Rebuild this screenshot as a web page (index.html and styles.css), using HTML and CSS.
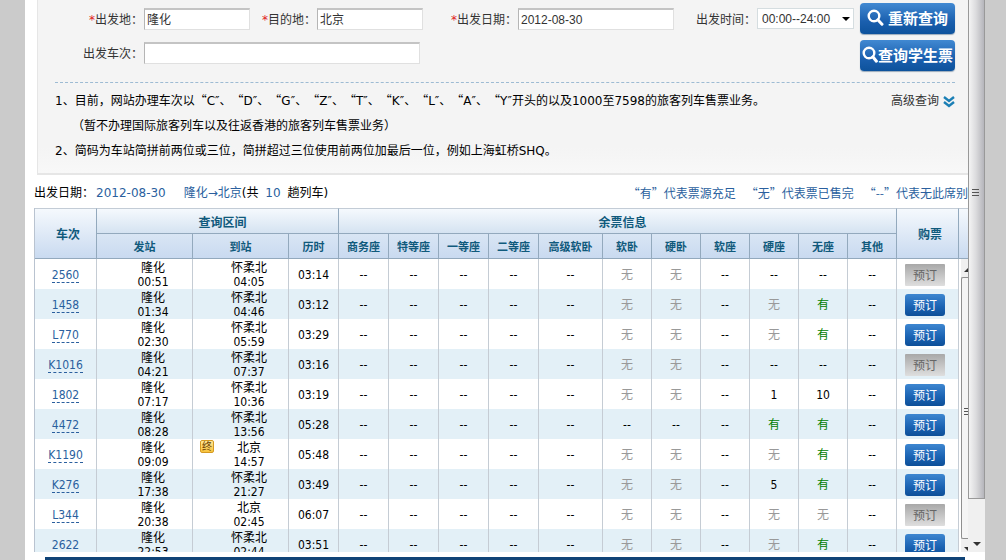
FILE: index.html
```
<!DOCTYPE html>
<html lang="zh-CN">
<head>
    <meta charset="UTF-8">
    <meta name="viewport" content="width=device-width, initial-scale=1.0">
    <title>车票查询</title>
    <link rel="stylesheet" href="styles.css">
</head>
<body>
    <div class="frame">
        <main class="content">
            <section class="panel">
                <form class="search">
                    <div class="fields">
                        <label for="from"><i>*</i>出发地：</label>
                        <input id="from" type="text" value="隆化">
                        <label for="to"><i>*</i>目的地：</label>
                        <input id="to" type="text" value="北京">
                        <label for="date"><i>*</i>出发日期：</label>
                        <input id="date" type="text" class="latin" value="2012-08-30">
                        <label for="time">出发时间：</label>
                        <div class="select-wrap">
                            <select id="time" class="latin"><option>00:00--24:00</option></select>
                        </div>
                        <label for="train">出发车次：</label>
                        <input id="train" type="text" class="train" value="">
                    </div>
                    <div class="actions">
                        <button type="button" class="btn-search">
                            <svg width="17" height="17" viewBox="0 0 17 17"><circle cx="7" cy="7" r="5.3" fill="none" stroke="#fff" stroke-width="2.4"/><path d="M10.8 10.8L15 15.2" stroke="#fff" stroke-width="3" stroke-linecap="round"/></svg>
                            <span>重新查询</span>
                        </button>
                        <button type="button" class="btn-search btn-student">
                            <svg width="16" height="17" viewBox="0 0 16 17"><circle cx="7" cy="7" r="5.3" fill="none" stroke="#fff" stroke-width="2.4"/><path d="M10.8 10.8L14.4 15.2" stroke="#fff" stroke-width="3" stroke-linecap="round"/></svg>
                            <span>查询学生票</span>
                        </button>
                    </div>
                </form>
                <div class="notes">
                    <div class="notes-text">
                        <p>1、目前，网站办理车次以<q>C</q>、<q>D</q>、<q>G</q>、<q>Z</q>、<q>T</q>、<q>K</q>、<q>L</q>、<q>A</q>、<q>Y</q>开头的以及1000至7598的旅客列车售票业务。</p>
                        <p class="sub">（暂不办理国际旅客列车以及往返香港的旅客列车售票业务）</p>
                        <p>2、简码为车站简拼前两位或三位，简拼超过三位使用前两位加最后一位，例如上海虹桥SHQ。</p>
                    </div>
                    <a href="#" class="advanced">高级查询
                        <svg width="12" height="12" viewBox="0 0 12 12" fill="none" stroke="#1b7fb5" stroke-width="2.4"><path d="M1 1l5 4 5-4M1 6l5 4 5-4"/></svg>
                    </a>
                </div>
            </section>

            <div class="summary">
                <p>出发日期：<b class="day">2012-08-30</b><b>隆化→北京</b>(共 <b class="count">10</b> 趟列车)</p>
                <p class="legend"><span>“有”代表票源充足</span><span>“无”代表票已售完</span><span>“--”代表无此席别</span></p>
            </div>

            <div class="grid">
                <table>
                    <colgroup>
                        <col class="w62"><col class="w96"><col class="w96"><col class="w50">
                        <col class="w50"><col class="w50"><col class="w50"><col class="w50"><col class="w64">
                        <col class="w49"><col class="w49"><col class="w49"><col class="w49"><col class="w49"><col class="w49">
                        <col class="w62"><col>
                    </colgroup>
                    <thead>
                        <tr>
                            <th rowspan="2" class="tall">车次</th>
                            <th colspan="3">查询区间</th>
                            <th colspan="11">余票信息</th>
                            <th rowspan="2" class="tall">购票</th>
                            <th rowspan="2" class="tall"></th>
                        </tr>
                        <tr class="second">
                            <th>发站</th><th>到站</th><th>历时</th>
                            <th>商务座</th><th>特等座</th><th>一等座</th><th>二等座</th><th>高级软卧</th>
                            <th>软卧</th><th>硬卧</th><th>软座</th><th>硬座</th><th>无座</th><th>其他</th>
                        </tr>
                    </thead>
                    <tbody id="trains"></tbody>
                </table>
                <div class="inner-bar"><span class="up"></span><div class="thumb"></div><span class="down"></span></div>
            </div>
        </main>
        <div class="outer-bar"><div class="thumb"></div><span class="down"></span></div>
    </div>
    <footer><div class="foot-line"></div></footer>
    <script src="trains.js"></script>
</body>
</html>
```

FILE: styles.css
```
* { box-sizing: border-box; }
body { margin: 0; height: 100vh; padding: 0 21px 0 25px; background: #cbcbcb; display: flex; flex-direction: column; font: 12px/15px "DejaVu Sans", "Noto Sans CJK SC", sans-serif; text-spacing-trim: space-all; color: #000; }
p { margin: 0; }
b, i { font-weight: normal; font-style: normal; }
.frame { flex: 1; min-height: 0; display: flex; background: #fff; overflow: hidden; }
.content { flex: 1; min-width: 0; padding-left: 9px; display: flex; flex-direction: column; overflow: hidden; }

/* search panel */
.panel { margin-left: 3px; padding: 3px 13px 9px 17px; background: linear-gradient(#f4f4f4 85%, #f8f8f8); border: 1px solid #e6e6e6; border-width: 0 0 2px 1px; }
.search { display: flex; justify-content: space-between; height: 80px; border-bottom: 1px dashed #9dbbd3; }
.fields { display: grid; grid-template-columns: 89px 106px 67px 106px 95px 156px 83px 97px; grid-auto-rows: 22px; row-gap: 12px; padding-top: 5px; align-content: start; }
.fields label { padding-right: 1px; text-align: right; line-height: 24px; color: #333; white-space: nowrap; }
.fields i { color: #e02020; }
.fields input { min-width: 0; height: 22px; padding: 0 0 2px 2px; border: 1px solid #e0e0e0; border-top: 2px solid #c4c4c4; border-left-color: #b5b5b5; background: #fff; font: inherit; color: #333; }
.fields .latin { font-family: "Liberation Sans", Arial, sans-serif; }
.fields input.latin { padding-bottom: 0; }
.fields .train { grid-column: span 4; width: 276px; }
.select-wrap { position: relative; height: 21px; }
.select-wrap select { width: 100%; height: 21px; padding: 0 0 0 4px; border: 1px solid #d5dde0; background: #fff; appearance: none; font-size: 12px; color: #333; }
.select-wrap::after { content: ""; position: absolute; right: 4px; top: 9px; border: 4px solid transparent; border-top-color: #000; border-bottom: 0; }
.actions { display: flex; flex-direction: column; gap: 6px; width: 95px; }
.btn-search { display: flex; align-items: center; justify-content: center; gap: 4px; height: 31px; padding: 0 0 2px; border: 0; border-radius: 4px; background: linear-gradient(#4189d2, #1a5fae 60%, #0d529c); box-shadow: 0 1px 1px #9ab; color: #fff; font: bold 15px/20px "Noto Sans CJK SC", sans-serif; white-space: nowrap; }
.btn-student { gap: 0; }
.notes { display: flex; justify-content: space-between; align-items: flex-start; padding-top: 6px; line-height: 25px; }
.notes-text { white-space: nowrap; }
.notes .sub { padding-left: 17px; }
.notes q { quotes: "“" "″"; }
.notes q::before { font-family: "Noto Sans CJK SC", sans-serif; line-height: 15px; }
.advanced { display: flex; align-items: center; gap: 4px; color: #333; text-decoration: none; white-space: nowrap; }

/* result summary */
.summary { display: flex; justify-content: space-between; height: 33px; line-height: 36px; white-space: nowrap; }
.summary b, .legend { color: #2a5f9e; }
.summary .day { margin: 0 18px 0 2px; }
.summary .count { margin: 0 3px; }
.legend { display: flex; gap: 10px; font-family: "Noto Sans CJK SC", sans-serif; }

/* ticket grid */
.grid { position: relative; flex: 1; min-height: 0; overflow: hidden; }
table { width: 100%; table-layout: fixed; border-collapse: separate; border-spacing: 0; border-left: 1px solid #b9c3d0; }
.w49 { width: 49px; }
.w50 { width: 50px; }
.w62 { width: 62px; }
.w64 { width: 64px; }
.w96 { width: 96px; }
th { height: 25px; padding: 0 0 0 10px; border-top: 1px solid #c3ccd6; border-right: 1px solid #93a9bd; background: linear-gradient(#f5f9fd, #d5e3f1); color: #105a7c; font: bold 12px/15px "Noto Sans CJK SC", sans-serif; white-space: nowrap; }
.second th, .tall { border-bottom: 1px solid #93a9bd; }
.second th { height: 26px; padding: 0; border-top-color: #93a9bd; background: linear-gradient(#d9e6f4, #c9daf0); font-size: 11px; }
.tall { padding-left: 5px; background: linear-gradient(#f5f9fd, #c9daf0); }
th:last-child, td:last-child { border-right: 0; }
.second th:last-child { border-right: 1px solid #93a9bd; }
td { height: 30px; padding: 2px 0 0; border-right: 1px solid #c5ccd4; text-align: center; line-height: 14px; font-family: "DejaVu Sans Condensed", "Noto Sans CJK SC", sans-serif; }
tr:nth-child(even) td { background: #e3f0f7; }
td:last-child, tr:nth-child(even) td:last-child { background: #fff; }
.station { position: relative; padding-left: 17px; }
.no { color: #999; }
.yes { color: #008000; }
.train-no { color: #2a5f9e; text-decoration: none; border-bottom: 1px dashed #2a5f9e; }
.last-stop { position: absolute; left: 7px; top: 1px; width: 14px; height: 13px; border: 1px solid #d59a22; border-radius: 2px; background: linear-gradient(#ffe89a, #f8c33c); font-size: 10px; line-height: 11px; color: #6b3d00; }
.book { display: block; width: 40px; height: 22px; margin: 0 0 0 8px; padding: 0; border: 0; border-radius: 3px; background: linear-gradient(#3d86d0, #1a62b2 60%, #0d4f98); color: #fff; font: 12px/20px "Noto Sans CJK SC", sans-serif; }
.book:disabled { border-radius: 1px; background: linear-gradient(#a8a8a8, #c4c4c4 50%, #dedede); color: #666; }

/* scrollbars */
.inner-bar { position: absolute; top: 51px; right: 0; bottom: 0; width: 7px; display: flex; flex-direction: column; background: #f0f0f0; overflow: hidden; }
.inner-bar .up, .inner-bar .down { height: 18px; flex: none; position: relative; }
.inner-bar .down { height: 13px; }
.inner-bar .up::after { content: ""; position: absolute; right: -4px; top: 9px; border: 4px solid transparent; border-bottom-color: #333; border-top: 0; }
.inner-bar .down::after { content: ""; position: absolute; right: -4px; top: 8px; border: 4px solid transparent; border-top-color: #333; border-bottom: 0; }
.inner-bar .thumb { flex: 1; position: relative; border: 1px solid #8f8f8f; border-right: 0; border-radius: 2px 0 0 2px; background: #f5f5f5; }
.outer-bar { width: 17px; display: flex; flex-direction: column; background: #f0f0f0; }
.outer-bar .thumb { flex: 1; position: relative; border: 1px solid #999; border-top: 0; background: linear-gradient(to right, #f4f4f4, #dcdcde 45%, #b5b5bb); }
.outer-bar .down { height: 53px; position: relative; }
.outer-bar .down::after { content: ""; position: absolute; left: 5px; bottom: 6px; border: 4px solid transparent; border-top-color: #333; border-bottom: 0; }
.thumb::after { content: ""; position: absolute; top: 50%; left: 3px; width: 7px; height: 8px; background: repeating-linear-gradient(#555 0 1px, transparent 1px 3px); }
.outer-bar .thumb::after { top: 38%; }
.inner-bar .thumb::after { left: 2px; width: 4px; }

footer { height: 8px; padding: 5px 20px 0; background: #fff; }
.foot-line { height: 3px; background: #0f4377; }
```

FILE: trains.js
```
// no, depart, arrival station, arrive, duration, seats (10 columns + 其他), bookable
const trains = [
    ['2560', '00:51', '怀柔北', '04:05', '03:14', '-----无无----', false],
    ['1458', '01:34', '怀柔北', '04:46', '03:12', '-----无无-无有-', true],
    ['L770', '02:30', '怀柔北', '05:59', '03:29', '-----无无-无有-', true],
    ['K1016', '04:21', '怀柔北', '07:37', '03:16', '-----无无----', false],
    ['1802', '07:17', '怀柔北', '10:36', '03:19', ['-', '-', '-', '-', '-', '无', '无', '-', '1', '10', '-'], true],
    ['4472', '08:28', '怀柔北', '13:56', '05:28', '--------有有-', true],
    ['K1190', '09:09', '北京', '14:57', '05:48', '-----无无-无有-', true],
    ['K276', '17:38', '怀柔北', '21:27', '03:49', '-----无无-5有-', true],
    ['L344', '20:38', '北京', '02:45', '06:07', '-----无无-无无-', false],
    ['2622', '22:53', '怀柔北', '02:44', '03:51', '-----无无-无有-', true]
];

function seatCell(s) {
    if (s === '无') return '<td class="no">无</td>';
    if (s === '有') return '<td class="yes">有</td>';
    return '<td>' + (s === '-' ? '--' : s) + '</td>';
}

document.getElementById('trains').innerHTML = trains.map(([no, dep, to, arr, time, seats, open]) => `
    <tr>
        <td><a href="#" class="train-no">${no}</a></td>
        <td class="station">隆化<br>${dep}</td>
        <td class="station">${no === 'K1190' ? '<span class="last-stop">终</span>' : ''}${to}<br>${arr}</td>
        <td>${time}</td>
        ${[...seats].map(seatCell).join('')}
        <td><button type="button" class="book"${open ? '' : ' disabled'}>预订</button></td>
        <td></td>
    </tr>`).join('');
```
